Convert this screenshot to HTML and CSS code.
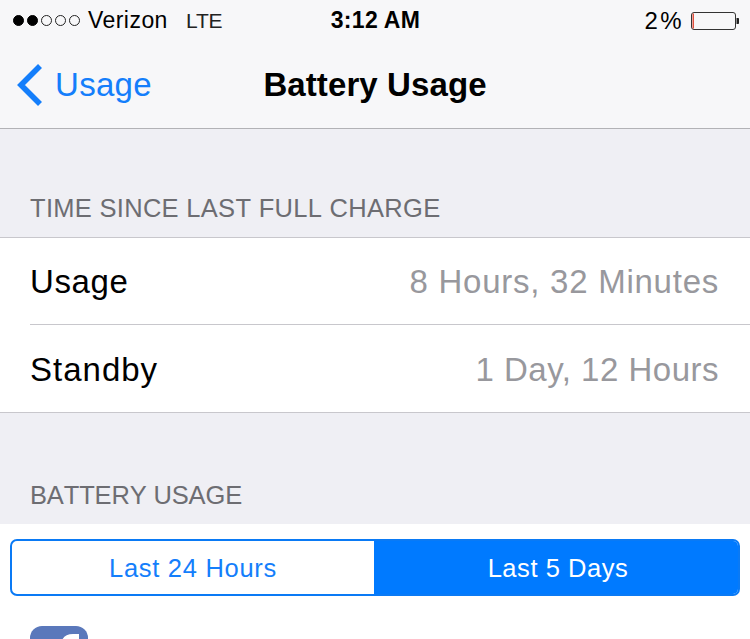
FILE: index.html
```html
<!DOCTYPE html>
<html lang="en">
<head>
<meta charset="utf-8">
<title>Battery Usage</title>
<link rel="stylesheet" href="styles.css">
</head>
<body>
<div class="phone">
  <header class="chrome">
    <div class="status">
      <div class="status-left">
        <span class="signal">
          <i class="dot on"></i><i class="dot on"></i><i class="dot"></i><i class="dot"></i><i class="dot"></i>
        </span>
        <span class="carrier">Verizon</span>
        <span class="network">LTE</span>
      </div>
      <div class="clock">3:12 AM</div>
      <div class="status-right">
        <span class="percent">2%</span>
        <svg class="battery" width="49" height="20" viewBox="0 0 49 20">
          <rect x="0.5" y="1.5" width="44" height="17" rx="2.5" fill="none" stroke="#333" stroke-width="1"/>
          <rect x="1.5" y="2.5" width="1.5" height="15" fill="#e0503f"/>
          <path d="M45.500 7h1.700a.8.8 0 0 1 .8.8v4.400a.8.8 0 0 1-.8.8h-1.700z" fill="#222"/>
        </svg>
      </div>
    </div>
    <nav class="navbar">
      <a class="back">
        <svg class="chevron" width="30" height="44" viewBox="0 0 30 44">
          <path d="M27 3 8 22l19 19" fill="none" stroke="#147efb" stroke-width="5.600"/>
        </svg>
        <span>Usage</span>
      </a>
      <h1 class="title">Battery Usage</h1>
    </nav>
  </header>

  <div class="section-label first">TIME SINCE LAST FULL CHARGE</div>
  <section class="group">
    <div class="row"><span class="row-label">Usage</span><span class="value">8 Hours, 32 Minutes</span></div>
    <div class="row"><span class="row-label wide">Standby</span><span class="value tight">1 Day, 12 Hours</span></div>
  </section>

  <div class="section-label second">BATTERY USAGE</div>
  <section class="panel">
    <div class="segments">
      <div class="segment">Last 24 Hours</div>
      <div class="segment active">Last 5 Days</div>
    </div>
    <div class="app-icon">
      <svg width="58" height="58" viewBox="0 0 58 58">
        <path d="M31 58V35h-7v-9h7v-6c0-8 4.500-12 12-12h6v9h-4c-3.500 0-5 1.500-5 5v4h9l-1 9h-8v23z" fill="#fff"/>
      </svg>
    </div>
  </section>
</div>
</body>
</html>
```

FILE: styles.css
```css
* { box-sizing: border-box; }
html, body { margin: 0; padding: 0; }
body {
  width: 750px;
  height: 639px;
  overflow: hidden;
  background: #efeff4;
  font-family: "Liberation Sans", Arial, sans-serif;
  color: #000;
}
.phone { width: 750px; height: 639px; overflow: hidden; display: flex; flex-direction: column; }
.chrome { height: 129px; flex: none; background: #f7f7f9; border-bottom: 1px solid #b2b2b6; }
.status {
  height: 41px;
  padding: 0 10px 0 13px;
  display: grid;
  grid-template-columns: 1fr auto 1fr;
  align-items: center;
  font-size: 23px;
}
.status-left { display: flex; align-items: center; }
.signal { display: flex; gap: 3px; margin-right: 8px; }
.dot { width: 11px; height: 11px; border-radius: 50%; border: 1px solid #222; }
.dot.on { background: #000; border-color: #000; }
.carrier { letter-spacing: 0.450px; }
.network { margin-left: 18px; font-size: 21px; color: #222; letter-spacing: -0.100px; }
.clock { font-weight: 700; font-size: 23px; letter-spacing: 0.300px; margin-right: 2px; }
.status-right { display: flex; align-items: center; justify-content: flex-end; gap: 8px; }
.percent { font-size: 24px; letter-spacing: 2.400px; margin-right: -1px; }
.navbar { position: relative; height: 87px; display: flex; align-items: center; justify-content: center; }
.back {
  position: absolute;
  left: 13px;
  top: 0;
  height: 87px;
  display: flex;
  align-items: center;
  gap: 12px;
  color: #147efb;
  font-size: 33px;
  letter-spacing: 0.300px;
}
.title { margin: 0; font-size: 33px; font-weight: 700; letter-spacing: 0.100px; }
.section-label {
  flex: none;
  padding-left: 30px;
  font-size: 25.500px;
  line-height: 30px;
  color: #6d6d72;
  font-kerning: none;
}
.section-label.first { margin-top: 64px; margin-bottom: 14px; letter-spacing: 0.300px; }
.section-label.second { margin-top: 67px; margin-bottom: 14px; letter-spacing: -0.150px; }
.group { flex: none; background: #fff; border-top: 1px solid #c8c7cc; border-bottom: 1px solid #c8c7cc; }
.row {
  height: 86px;
  margin-left: 30px;
  padding: 2px 31px 0 0;
  display: flex;
  align-items: center;
  justify-content: space-between;
  font-size: 33px;
}
.row + .row { height: 88px; border-top: 1px solid #c8c7cc; }
.row-label { letter-spacing: 0.600px; }
.row-label.wide { letter-spacing: 1px; }
.value { color: #98989d; letter-spacing: 0.750px; }
.value.tight { letter-spacing: 0.500px; }
.panel { flex: 1; background: #fff; padding: 15px 10px 0; }
.segments {
  height: 57px;
  display: flex;
  border: 2px solid #0a7af5;
  border-radius: 7px;
  overflow: hidden;
  font-size: 25.500px;
  letter-spacing: 0.550px;
}
.segment {
  flex: none;
  width: 362px;
  padding-top: 2px;
  display: flex;
  align-items: center;
  justify-content: center;
  color: #147efb;
  letter-spacing: 0.700px;
}
.segment.active { flex: 1; width: auto; padding-left: 4px; background: #007aff; color: #fff; letter-spacing: 0.550px; }
.app-icon {
  width: 58px;
  height: 58px;
  margin: 30px 0 0 20px;
  border-radius: 12px;
  background: #5a78bb;
  overflow: hidden;
}
```
